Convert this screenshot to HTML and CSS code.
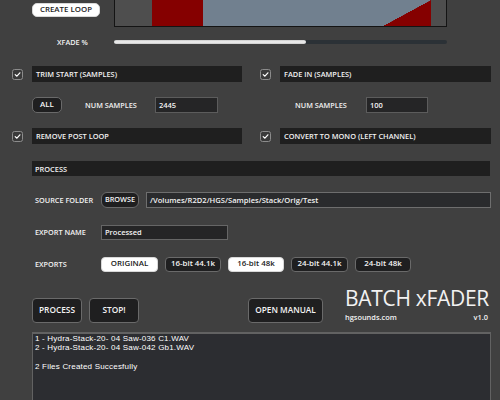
FILE: index.html
```html
<!DOCTYPE html>
<html>
<head>
<meta charset="utf-8">
<link rel="stylesheet" href="styles.css">
</head>
<body>
<div class="app">
  <div class="top">
    <div class="create-cell"><button class="btn btn-white btn-create">CREATE LOOP</button></div>
    <div class="wave">
      <div class="seg seg-gray1"></div>
      <div class="seg seg-red"></div>
      <div class="seg seg-slate"></div>
      <div class="seg seg-tri"></div>
      <div class="seg seg-gray2"></div>
    </div>
  </div>

  <div class="xfade">
    <span class="xfade-label">XFADE %</span>
    <div class="slider"><div class="slider-fill" style="width:57.7%"></div></div>
  </div>

  <div class="options">
    <span class="check"><svg viewBox="0 0 11 11" width="11" height="11"><polyline points="3.2,5.6 4.9,7.2 7.9,3.8" fill="none" stroke="#fff" stroke-width="1.2" stroke-linecap="round" stroke-linejoin="round"/></svg></span>
    <div class="bar">TRIM START (SAMPLES)</div>
    <span class="check check-right"><svg viewBox="0 0 11 11" width="11" height="11"><polyline points="3.2,5.6 4.9,7.2 7.9,3.8" fill="none" stroke="#fff" stroke-width="1.2" stroke-linecap="round" stroke-linejoin="round"/></svg></span>
    <div class="bar">FADE IN (SAMPLES)</div>

    <div class="sub sub-left">
      <button class="btn btn-dark btn-all">ALL</button>
      <span class="sub-label sub-label-left">NUM SAMPLES</span>
      <div class="field field-num-left">2445</div>
    </div>
    <div class="sub sub-right">
      <span class="sub-label sub-label-right">NUM SAMPLES</span>
      <div class="field field-num-right">100</div>
    </div>

    <span class="check"><svg viewBox="0 0 11 11" width="11" height="11"><polyline points="3.2,5.6 4.9,7.2 7.9,3.8" fill="none" stroke="#fff" stroke-width="1.2" stroke-linecap="round" stroke-linejoin="round"/></svg></span>
    <div class="bar">REMOVE POST LOOP</div>
    <span class="check check-right"><svg viewBox="0 0 11 11" width="11" height="11"><polyline points="3.2,5.6 4.9,7.2 7.9,3.8" fill="none" stroke="#fff" stroke-width="1.2" stroke-linecap="round" stroke-linejoin="round"/></svg></span>
    <div class="bar">CONVERT TO MONO (LEFT CHANNEL)</div>
  </div>

  <div class="process">
    <div class="bar bar-process">PROCESS</div>

    <div class="form-row row-source">
      <span class="form-label">SOURCE FOLDER</span>
      <div class="form-content">
        <button class="btn btn-dark btn-browse">BROWSE</button>
        <div class="field field-path">/Volumes/R2D2/HGS/Samples/Stack/Orig/Test</div>
      </div>
    </div>

    <div class="form-row row-export">
      <span class="form-label">EXPORT NAME</span>
      <div class="form-content">
        <div class="field field-name">Processed</div>
      </div>
    </div>

    <div class="form-row row-exports">
      <span class="form-label">EXPORTS</span>
      <div class="form-content">
        <button class="btn btn-white btn-fmt btn-wide">ORIGINAL</button>
        <button class="btn btn-dark btn-fmt">16-bit 44.1k</button>
        <button class="btn btn-white btn-fmt">16-bit 48k</button>
        <button class="btn btn-dark btn-fmt btn-wide">24-bit 44.1k</button>
        <button class="btn btn-dark btn-fmt">24-bit 48k</button>
      </div>
    </div>
  </div>

  <div class="bottom">
    <button class="btn btn-dark btn-big btn-process">PROCESS</button>
    <button class="btn btn-dark btn-big btn-stop">STOP!</button>
    <button class="btn btn-dark btn-big btn-manual">OPEN MANUAL</button>
    <div class="brand">
      <div class="brand-title">BATCH xFADER</div>
      <div class="brand-meta"><span>hgsounds.com</span><span>v1.0</span></div>
    </div>
  </div>

  <div class="log">
    <div class="log-line">1 - Hydra-Stack-20- 04 Saw-036 C1.WAV</div>
    <div class="log-line">2 - Hydra-Stack-20- 04 Saw-042 Gb1.WAV</div>
    <div class="log-line">&nbsp;</div>
    <div class="log-line">2 Files Created Succesfully</div>
  </div>
</div>
</body>
</html>
```

FILE: styles.css
```css
* { box-sizing: border-box; }

html, body {
  margin: 0;
  padding: 0;
  background: #404040;
  overflow: hidden;
}

body {
  font-family: "Open Sans", "DejaVu Sans", sans-serif;
  font-weight: 600;
  color: #f2f2f2;
  width: 500px;
  height: 400px;
}

.app {
  width: 500px;
  height: 400px;
}

.btn {
  font-family: "Open Sans", "DejaVu Sans", sans-serif;
  font-weight: 600;
  margin: 0;
  padding: 0;
  cursor: default;
  display: flex;
  align-items: center;
  justify-content: center;
  line-height: 1;
}

.btn-white {
  background: #ffffff;
  color: #1c1c1c;
  border: 1px solid #d8d8d8;
  border-radius: 4px;
}

.btn-dark {
  background: #1f1f20;
  color: #f4f4f4;
  border: 1px solid #6a6a6a;
  border-radius: 4px;
}

/* top */
.top {
  display: grid;
  grid-template-columns: 114px 333px;
  height: 27px;
}

.create-cell {
  padding: 3px 0 0 32px;
}

.btn-create {
  width: 68px;
  height: 14px;
  font-size: 7.9px;
  border-radius: 5px;
}

.wave {
  display: flex;
  border: 1px solid #141414;
  border-top: none;
  height: 27px;
}

.seg { height: 100%; }
.seg-gray1 { width: 37px; background: #4e4e4e; }
.seg-red { width: 51px; background: #850000; }
.seg-slate { flex: 1; background: #71808f; }
.seg-tri { width: 48px; background: linear-gradient(to bottom right, #71808f 50%, #850000 50.5%); }
.seg-gray2 { width: 15px; background: #4e4e4e; }

/* xfade */
.xfade {
  display: grid;
  grid-template-columns: 114px 333px;
  align-items: center;
  height: 12px;
  margin-top: 9px;
}

.xfade-label {
  font-size: 7.3px;
  padding-left: 57px;
}

.slider {
  height: 4px;
  border-radius: 2px;
  background: #2b3136;
}

.slider-fill {
  height: 100%;
  border-radius: 2px;
  background: linear-gradient(to bottom, #c9c9c9, #f2f2f2 50%, #c9c9c9);
}

/* options */
.options {
  display: grid;
  grid-template-columns: 11px 210px 20px 211px;
  column-gap: 9px;
  grid-template-rows: 16px 16px 16px;
  row-gap: 15px;
  padding-left: 12px;
  margin-top: 18px;
}

.check {
  align-self: center;
  width: 11px;
  height: 11px;
  border: 1px solid #8c8c8c;
  border-radius: 2.5px;
  background: #3a3a3a;
  display: flex;
  align-items: center;
  justify-content: center;
}

.check-right {
  margin-left: 9px;
}

.check svg {
  display: block;
  flex: none;
}

.bar {
  background: #1f1f1f;
  font-size: 7.4px;
  display: flex;
  align-items: center;
  padding-left: 4px;
  height: 16px;
}

.sub {
  display: flex;
  align-items: center;
}

.sub-left { grid-column: 2; }
.sub-right { grid-column: 4; }

.btn-all {
  width: 30px;
  height: 16px;
  font-size: 7.9px;
  border-radius: 5px;
}

.sub-label {
  font-size: 7.3px;
}

.sub-label-left {
  margin-left: 23px;
  width: 70px;
}

.sub-label-right {
  margin-left: 15px;
  width: 71px;
}

.field {
  background: #252526;
  border: 1px solid #5c5c5c;
  height: 16px;
  font-size: 7.5px;
  display: flex;
  align-items: center;
  padding-left: 3px;
}

.field-num-left { width: 63px; }
.field-num-right { width: 62px; }

/* process section */
.process {
  padding-left: 32px;
  margin-top: 17px;
}

.bar-process {
  width: 458px;
  height: 15px;
  padding-left: 3px;
}

.form-row {
  display: grid;
  grid-template-columns: 69px 1fr;
  align-items: center;
  margin-top: 16px;
  height: 16px;
}

.form-label {
  font-size: 7.3px;
  padding-left: 3px;
}

.form-content {
  display: flex;
  align-items: center;
  gap: 7px;
}

.btn-browse {
  width: 38px;
  height: 16px;
  font-size: 7.3px;
  border-radius: 6px;
}

.field-path {
  width: 345px;
  background: #2a2b2d;
  border-color: #6e6e6e;
  font-size: 7.6px;
}

.field-name {
  width: 127px;
  height: 15px;
  border-color: #666;
}

.btn-fmt {
  width: 56px;
  height: 15px;
  font-size: 7.9px;
  border-radius: 4px;
}

.btn-wide { width: 57px; }

/* bottom */
.bottom {
  display: flex;
  align-items: flex-start;
  padding-left: 32px;
  margin-top: 15px;
  height: 36px;
}

.btn-big {
  margin-top: 11px;
  height: 25px;
  font-size: 8.3px;
  border-radius: 4px;
}

.btn-process { width: 50px; }
.btn-stop { width: 50px; margin-left: 7px; }
.btn-manual { width: 75px; margin-left: 109px; }

.brand {
  margin-left: 22px;
  width: 143px;
  display: flex;
  flex-direction: column;
}

.brand-title {
  font-size: 21px;
  font-weight: 400;
  line-height: 29px;
  margin-top: -3px;
  white-space: nowrap;
  letter-spacing: -0.3px;
}

.brand-meta {
  display: flex;
  justify-content: space-between;
  font-size: 7.4px;
  line-height: 10px;
  margin-top: -1px;
}

/* log */
.log {
  margin-left: 32px;
  margin-top: 9px;
  width: 459px;
  height: 69px;
  background: #2c2d31;
  border: 1px solid #626262;
  border-top-width: 2px;
  border-bottom: none;
  padding: 0 0 0 2px;
}

.log-line {
  font-family: "Liberation Sans", Arial, sans-serif;
  font-weight: 400;
  color: #ffffff;
  font-size: 8px;
  letter-spacing: 0.2px;
  line-height: 9.3px;
  white-space: pre;
}
```
